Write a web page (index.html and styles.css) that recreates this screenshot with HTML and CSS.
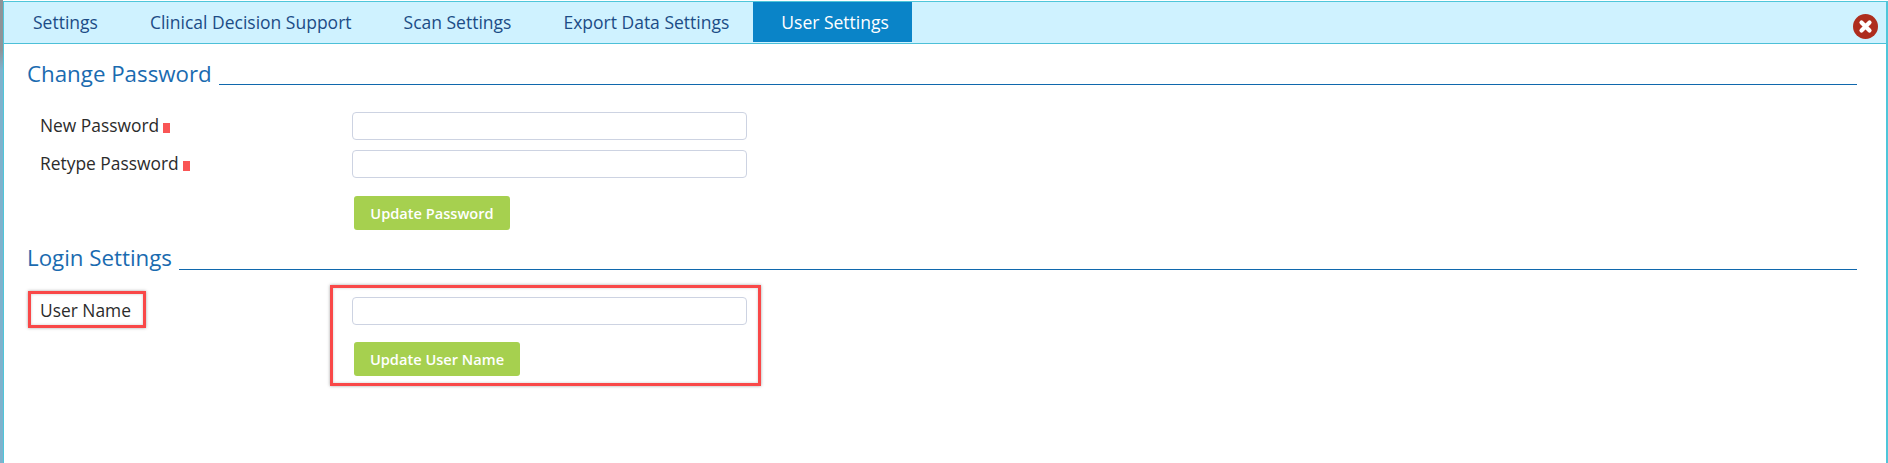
FILE: index.html
```html
<!DOCTYPE html>
<html lang="en">
<head>
<meta charset="utf-8">
<title>User Settings</title>
<link rel="stylesheet" href="styles.css">
</head>
<body>
<div class="backdrop"></div>
<div class="dialog">
  <div class="tabbar">
    <nav class="tabs">
      <a class="tab">Settings</a>
      <a class="tab">Clinical Decision Support</a>
      <a class="tab">Scan Settings</a>
      <a class="tab">Export Data Settings</a>
      <a class="tab active">User Settings</a>
    </nav>
    <svg class="close" viewBox="0 0 25 25" width="25" height="25">
      <circle cx="12.5" cy="12.5" r="12.5" fill="#ae2d1e"/>
      <path d="M8.5 8.5L16.5 16.5M16.5 8.5L8.5 16.5" stroke="#fff" stroke-width="4.2" stroke-linecap="round"/>
    </svg>
  </div>
  <div class="content">
    <section class="group">
      <h2 class="legend legend-first"><span>Change Password</span></h2>
      <div class="row row-first">
        <label class="label">New Password<i class="req"></i></label>
        <input class="field" type="password">
      </div>
      <div class="row row-second">
        <label class="label">Retype Password<i class="req"></i></label>
        <input class="field" type="password">
      </div>
      <div class="actions"><button class="btn btn-password">Update Password</button></div>
    </section>
    <section class="group group-login">
      <h2 class="legend"><span>Login Settings</span></h2>
      <div class="row row-user">
        <label class="label">User Name</label>
        <input class="field" type="text">
      </div>
      <div class="actions actions-user"><button class="btn btn-user">Update User Name</button></div>
      <div class="mark mark-label"></div>
      <div class="mark mark-field"></div>
    </section>
  </div>
</div>
</body>
</html>
```
FILE: styles.css
```css
* { box-sizing: border-box; }
html, body { height: 100%; }
body {
  margin: 0;
  display: flex;
  overflow: hidden;
  background: #fff;
  font-family: "Open Sans", "Noto Sans", sans-serif;
  color: #2b2b2b;
}
.backdrop {
  width: 3px;
  flex: none;
  background: linear-gradient(#8f9499 0, #8f9499 50px, #7fb2cd 70px, #7fb2cd 100%);
}
.dialog {
  flex: 1;
  display: flex;
  flex-direction: column;
  margin-top: 1px;
  border: 1px solid #4fc6da;
  border-width: 1px 2px 0 1px;
  background: #fff;
}
.tabbar {
  height: 42px;
  flex: none;
  display: flex;
  justify-content: space-between;
  padding-right: 8px;
  background: #cff2ff;
  border-bottom: 1px solid #4cc0d8;
}
.tabs { display: flex; height: 40px; padding-left: 3px; }
.tab {
  padding: 0 26px;
  line-height: 40px;
  font-size: 17.5px;
  color: #1c4c86;
  white-space: nowrap;
}
.tab.active { margin-left: -2px; padding: 0 23px 0 28px; background: #0a84c8; color: #fff; }
.close { margin-top: 12px; }
.content { padding: 0 29px 0 23px; }
.group { position: relative; }
.legend {
  display: flex;
  align-items: flex-end;
  margin: 0;
  height: 41px;
  font-size: 22.3px;
  font-weight: 400;
  color: #1a6bb0;
  line-height: 26px;
}
.legend-first { height: 42px; line-height: 24px; }
.legend span { white-space: nowrap; }
.legend::after {
  content: "";
  flex: 1;
  height: 1px;
  margin: 0 0 0 7px;
  background: #1068ad;
  transform: translateY(-1px);
}
.row { display: flex; align-items: center; padding-left: 13px; }
.row-first { margin-top: 26px; }
.row-second { margin-top: 10px; }
.row-user { margin-top: 26px; }
.label { width: 312px; flex: none; padding-bottom: 2px; font-size: 17.4px; line-height: 26px; white-space: nowrap; }
.req {
  display: inline-block;
  width: 7px;
  height: 10px;
  margin-left: 4px;
  background: #f95555;
  vertical-align: -1px;
}
.field {
  width: 395px;
  height: 28px;
  margin: 0;
  padding: 0 8px;
  border: 1px solid #cdd3e2;
  border-radius: 4px;
  background: #fff;
}
.actions { padding: 18px 0 0 327px; }
.actions-user { padding-top: 17px; }
.btn {
  display: block;
  height: 34px;
  padding: 0;
  border: 0;
  border-radius: 3px;
  background: #a6d04f;
  color: #fff;
  font-family: inherit;
  font-size: 14.6px;
  font-weight: 600;
}
.btn-password { width: 156px; }
.btn-user { width: 166px; }
.mark {
  position: absolute;
  border: 3px solid #f94848;
  box-shadow: 0 0 3px rgba(0,0,0,.35), inset 0 0 3px rgba(0,0,0,.2);
}
.mark-label { left: 1px; top: 61px; width: 118px; height: 37px; }
.mark-field { left: 303px; top: 55px; width: 431px; height: 101px; }
```
